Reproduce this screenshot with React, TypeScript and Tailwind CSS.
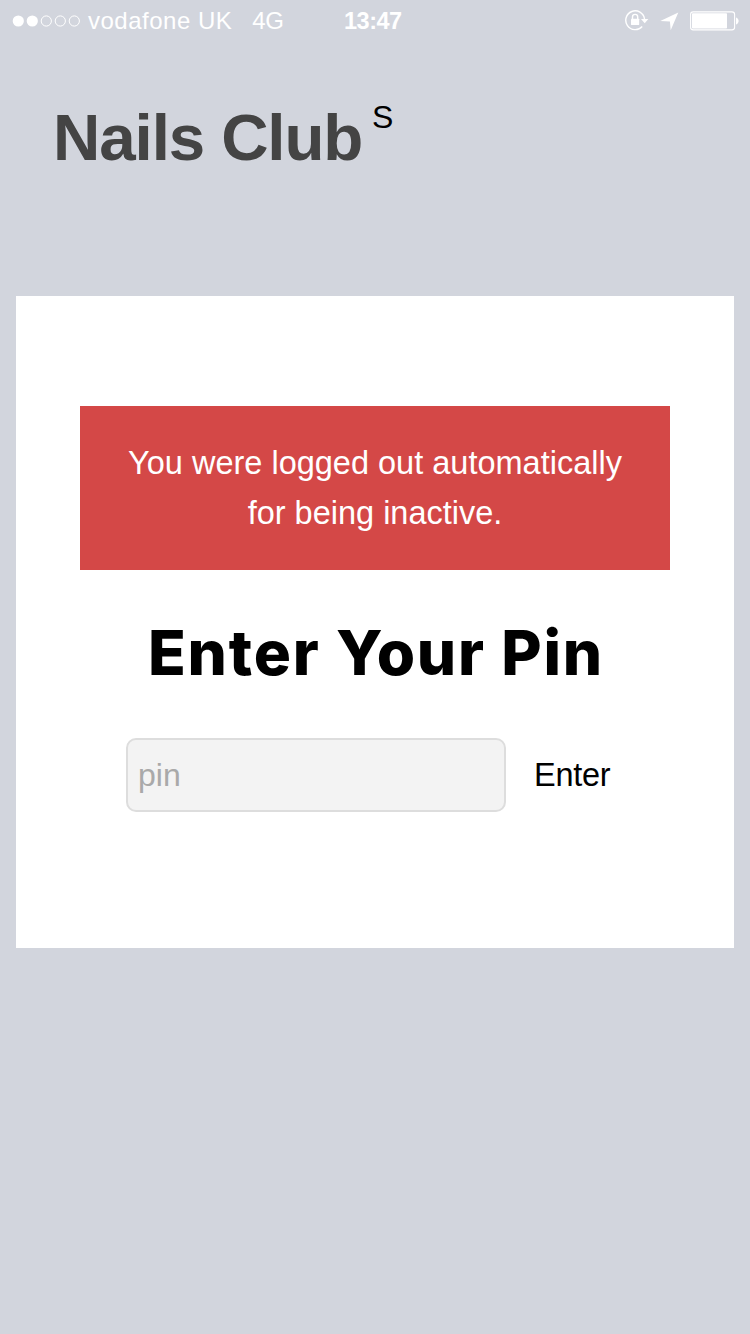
function SignalDots() {
  return (
    <svg width="68" height="12" viewBox="0 0 68 12" fill="none" stroke="#fff">
      <circle cx="6.3" cy="6" r="5.6" fill="#fff" stroke="none" />
      <circle cx="20.3" cy="6" r="5.6" fill="#fff" stroke="none" />
      <circle cx="34.3" cy="6" r="5.1" />
      <circle cx="48.3" cy="6" r="5.1" />
      <circle cx="62.3" cy="6" r="5.1" />
    </svg>
  );
}

function RotationLockIcon() {
  return (
    <svg width="24" height="22" viewBox="0 0 24 22" fill="none">
      <path d="M17.2 16.5A9.4 9.4 0 1 1 19.5 9" stroke="#fff" strokeWidth="1.4" />
      <path d="M16 9H23.4L19.7 13.2Z" fill="#fff" />
      <path d="M7.5 9V7a2.6 2.6 0 0 1 5.2 0V9" stroke="#fff" strokeWidth="1.4" />
      <rect x="6" y="8.8" width="8.2" height="6.2" rx="0.4" fill="#fff" />
    </svg>
  );
}

function LocationIcon() {
  return (
    <svg width="19" height="19" viewBox="0 0 19 19" fill="#fff">
      <path d="M18.3 0.4L10.7 18.2L9.9 9.5L0.3 9Z" />
    </svg>
  );
}

function BatteryIcon() {
  return (
    <svg width="50" height="20" viewBox="0 0 50 20" fill="none">
      <rect x="0.6" y="0.9" width="44" height="18" rx="2.6" stroke="#fff" strokeWidth="1.1" />
      <rect x="2" y="2.3" width="35" height="15.2" rx="0.8" fill="#fff" />
      <path d="M46 6.4C49.5 7.6 49.5 12.2 46 13.4Z" fill="#fff" />
    </svg>
  );
}

function StatusBar() {
  return (
    <div className="grid h-10 grid-cols-[344px_1fr_auto] items-center pt-px pr-[10px] pl-3 text-[24px] leading-[39px] whitespace-nowrap text-white">
      <div className="flex items-center">
        <SignalDots />
        <span className="ml-2 pb-[2px] leading-[37px] tracking-[0.5px]">vodafone UK</span>
        <span className="ml-5 pb-[2px] leading-[37px] tracking-[-0.4px]">4G</span>
      </div>
      <span className="-ml-3 pt-px text-[23.5px] font-bold tracking-[-0.5px]">13:47</span>
      <div className="flex items-center">
        <RotationLockIcon />
        <div className="ml-[11px]">
          <LocationIcon />
        </div>
        <div className="ml-[11px]">
          <BatteryIcon />
        </div>
      </div>
    </div>
  );
}

export default function App() {
  return (
    <div className="min-h-[1334px] w-[750px] bg-[#d2d5dd] font-['Liberation_Sans',Arial,sans-serif] text-black">
      <StatusBar />
      <header className="flex h-64 items-start pt-[60px] pl-[53px] whitespace-nowrap">
        <h1 className="w-[309px] text-[65.5px] leading-[76px] font-bold tracking-[-1.1px] text-[#444]">Nails Club</h1>
        <span className="ml-[10px] text-[32px] leading-[34px]">S</span>
      </header>
      <main className="mx-4 flex h-[652px] flex-col items-center bg-white pt-[110px]">
        <div className="h-[164px] w-[590px] bg-[#d44847] pt-8 text-center text-[32.5px] leading-[50px] text-white">
          You were logged out automatically
          <br />
          for being inactive.
        </div>
        <h2 className="mt-[43px] pl-[2px] font-['Inter',sans-serif] text-[62px] leading-20 font-extrabold tracking-[1.8px] whitespace-nowrap">
          Enter Your Pin
        </h2>
        <form className="mt-[45px] flex h-[74px] w-full items-center pl-[110px]" onSubmit={(e) => e.preventDefault()}>
          <input
            type="text"
            placeholder="pin"
            className="h-[74px] w-[380px] rounded-[10px] border-2 border-[#ddd] bg-[#f3f3f3] px-[10px] text-[32px] outline-none placeholder:text-[#a9a9a9]"
          />
          <button type="submit" className="ml-7 pt-px text-[32.5px] tracking-[-0.3px]">
            Enter
          </button>
        </form>
      </main>
    </div>
  );
}
